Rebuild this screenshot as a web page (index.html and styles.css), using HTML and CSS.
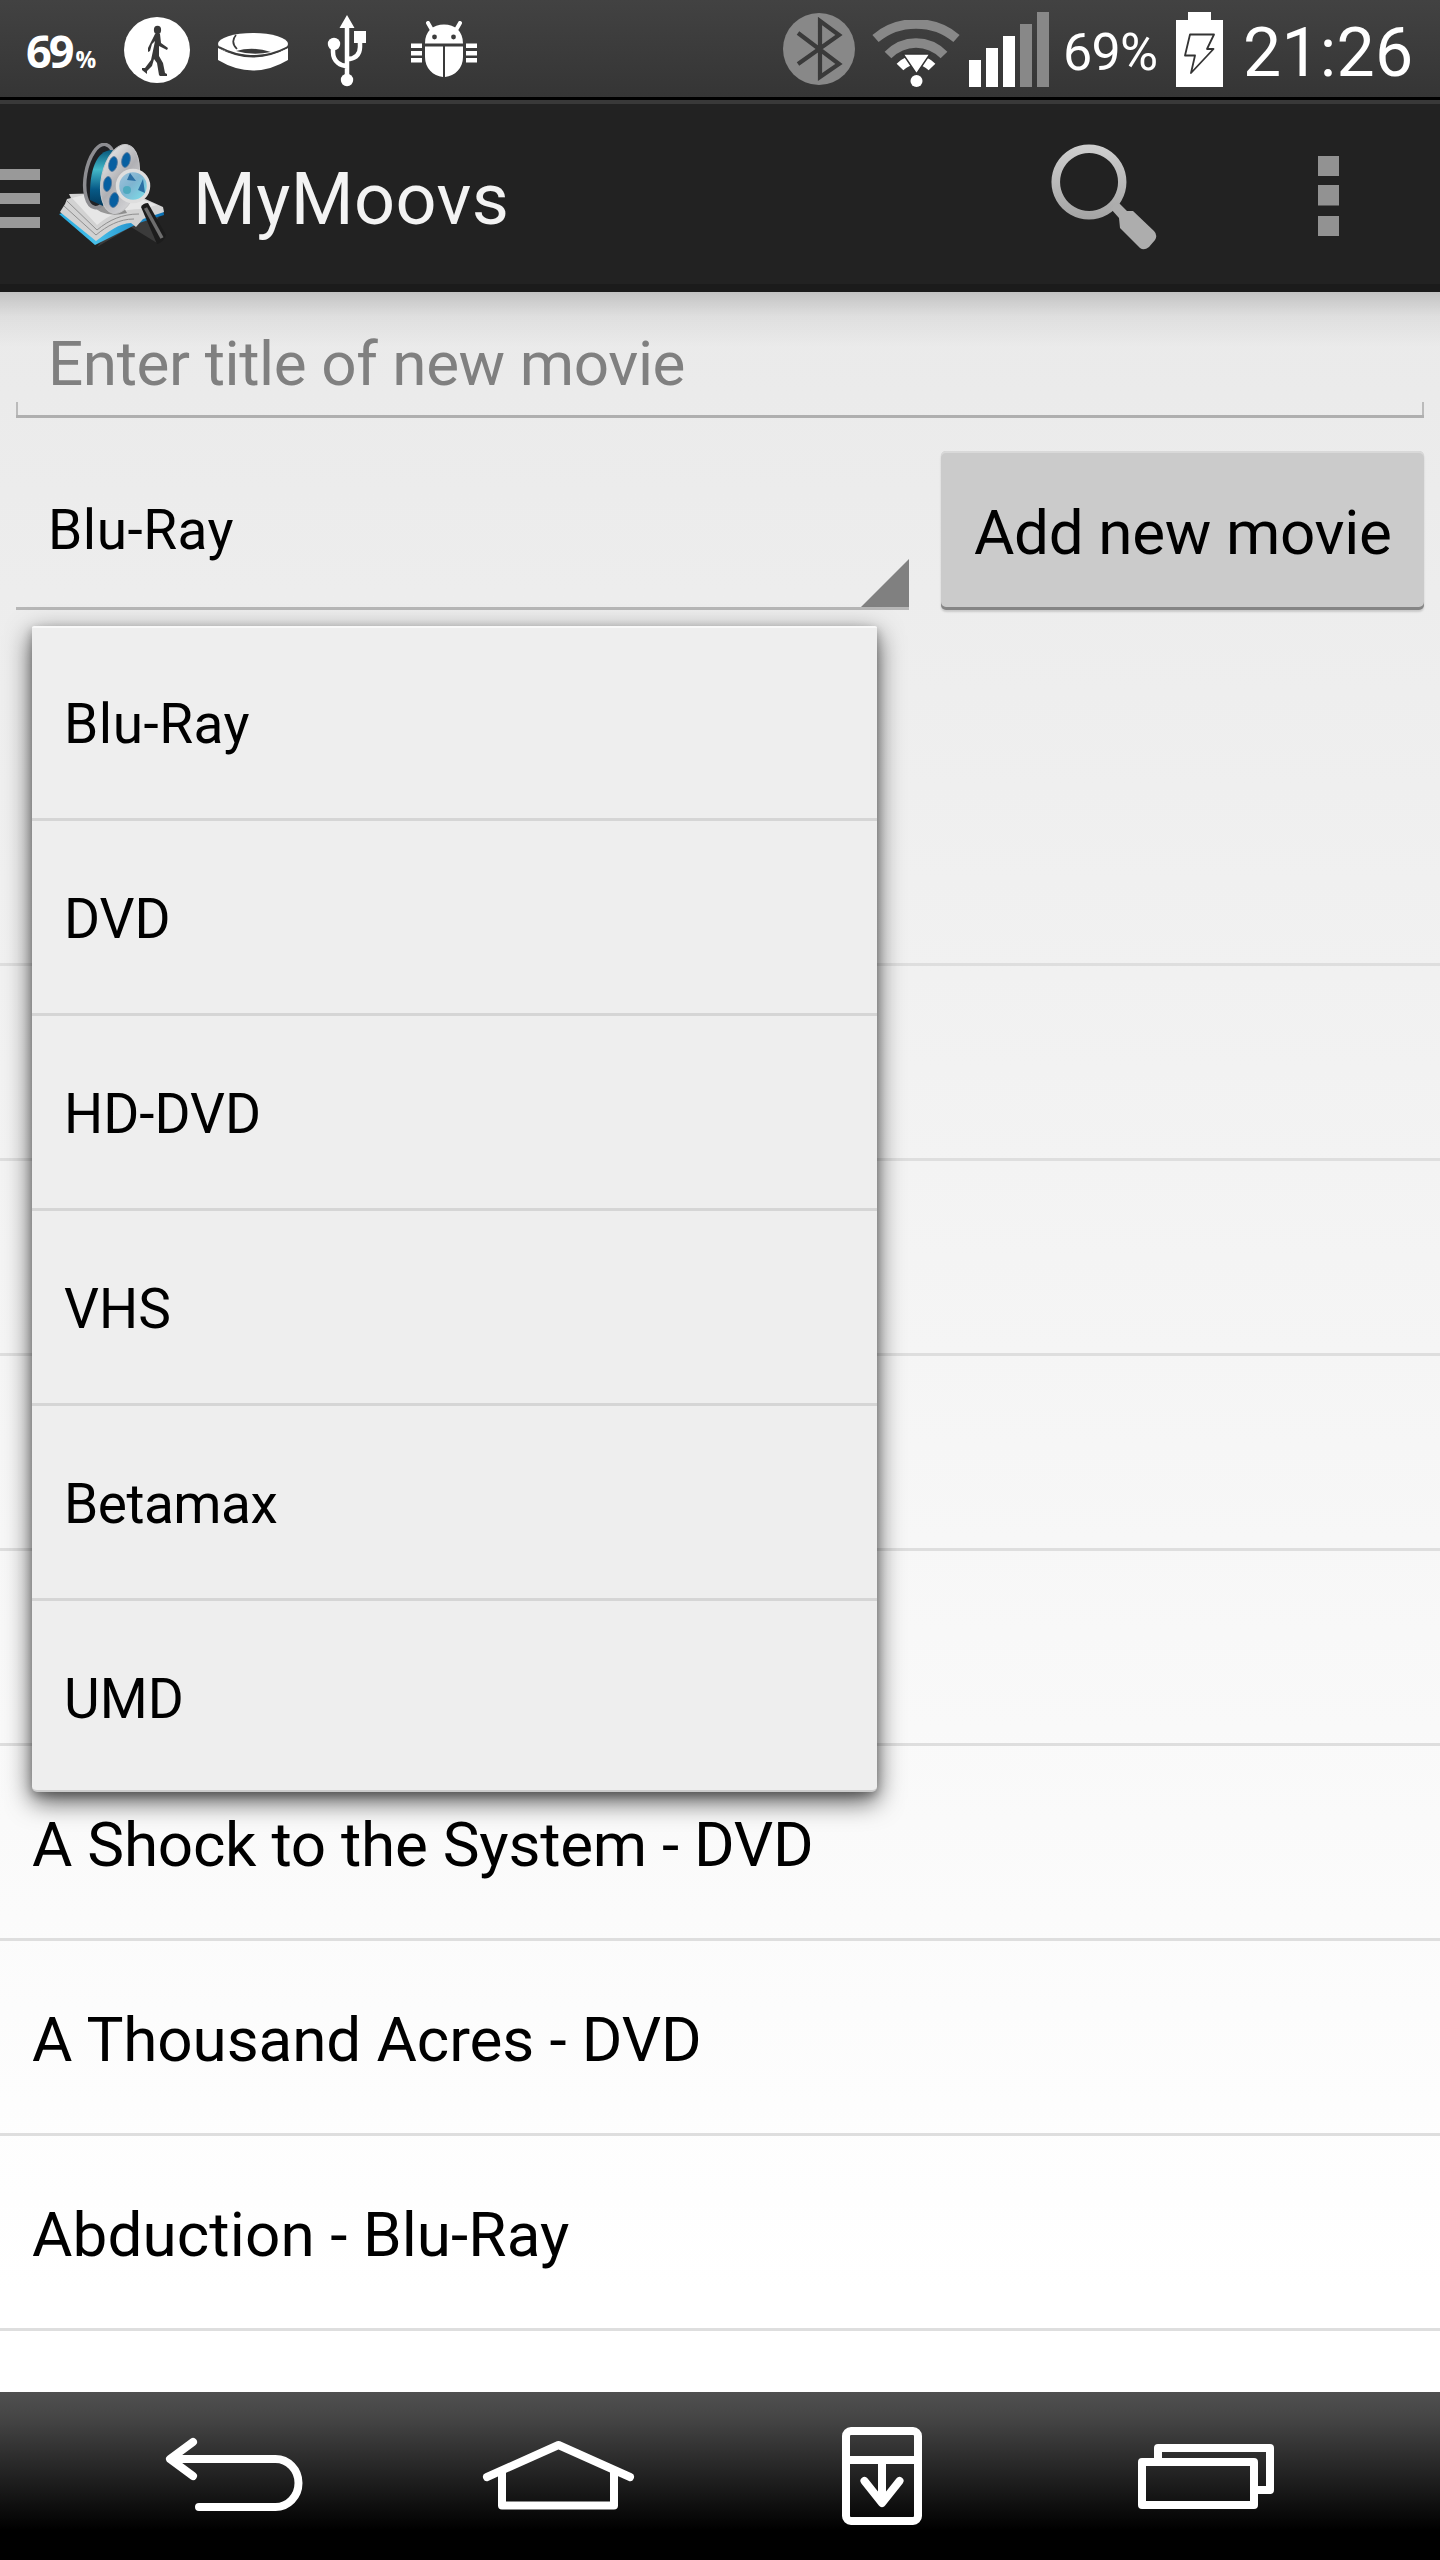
FILE: index.html
```html
<!DOCTYPE html>
<html lang="en">
<head>
<meta charset="utf-8">
<title>MyMoovs</title>
<link rel="stylesheet" href="styles.css">
</head>
<body>
<div class="screen">
  <header class="status">
    <div class="status-left">
      <span class="batt-note">69<small>%</small></span>
      <svg class="i-walk" width="66" height="66" viewBox="0 0 66 66"><circle cx="33" cy="33" r="33" fill="#fff"/><g fill="#383838"><ellipse cx="33.500" cy="13" rx="3.600" ry="4.200"/><path d="M31 17h5l1 9 7 5-1 2-8-4 0 10 4 7 2 10 2 1v2h-7l-1-1-2-12-3-4-2 7-5 5 0 3-5-4v-2l3 0 6-8 3-14 1-5-3 3-2 7-2 1 0-4 4-8z"/></g></svg>
      <svg class="i-ring" width="72" height="38" viewBox="0 0 72 38"><path d="M1 15Q36 34 71 15V27Q36 48 1 27Z" fill="#fff"/><ellipse cx="36" cy="11" rx="35" ry="11" fill="#fff"/><path d="M19 18Q36 13 54 19Q36 23 19 18Z" fill="#3b3b3b"/><path d="M2 14Q36 32 71 14M19 2Q13 9 20 16" fill="none" stroke="#3b3b3b" stroke-width="1.700"/></svg>
      <svg class="i-usb" width="40" height="72" viewBox="0 0 40 72"><path d="M20 10V62M6 30V37C6 47 14 51 20 51M33 20V32C33 41 27 44 20 44" fill="none" stroke="#fff" stroke-width="4.500"/><path d="M20 0 27.500 13H12.500ZM27 16H39V28H27Z" fill="#fff"/><circle cx="7" cy="29" r="6.200" fill="#fff"/><circle cx="20" cy="65" r="6.200" fill="#fff"/></svg>
      <svg class="i-bug" width="66" height="57" viewBox="0 0 66 57"><g fill="#fff"><path d="M14 22.500C14 10 22 3.500 33 3.500S52 10 52 22.500ZM14 25.500H32V56C22 55 14 47 14 36ZM34 25.500H52V36C52 47 44 55 34 56ZM0 22.500H11V27H0ZM0 30H11V34.500H0ZM0 37H11V41.500H0ZM55 22.500H66V27H55ZM55 30H66V34.500H55ZM55 37H66V41.500H55Z"/></g><path d="M17 2 21 9M49 2 45 9" stroke="#fff" stroke-width="4" stroke-linecap="round"/><circle cx="23.500" cy="16" r="2.400" fill="#3b3b3b"/><circle cx="42.500" cy="16" r="2.400" fill="#3b3b3b"/></svg>
    </div>
    <div class="status-right">
      <svg class="i-bt" width="72" height="72" viewBox="0 0 72 72"><circle cx="36" cy="36" r="36" fill="#888"/><path d="M15 20 56 51 37 64V8L56 22 15 51" fill="none" stroke="#3a3a3a" stroke-width="4.200"/></svg>
      <svg class="i-wifi" width="88" height="67" viewBox="0 0 88 67"><path d="M3.500 18.500C26-1 62-1 84.500 18.500M16 35C32 19 56 19 72 35" fill="none" stroke="#888" stroke-width="9.500"/><path d="M28 47C37 38 51 38 60 47" fill="none" stroke="#fff" stroke-width="9.500"/><path d="M31 34H58L44.500 54Z" fill="#fff" stroke="#333" stroke-width="1.500"/><circle cx="44.500" cy="61" r="6" fill="#fff"/></svg>
      <svg class="i-sig" width="80" height="75" viewBox="0 0 80 75"><path d="M0 48H12V75H0ZM17 36H29V75H17ZM34 24H46V75H34Z" fill="#fff"/><path d="M51 12H63V75H51ZM68 0H80V75H68Z" fill="#888"/></svg>
      <span class="pct">69%</span>
      <svg class="i-batt" width="47" height="75" viewBox="0 0 47 75"><path d="M12 0H35V8H47V75H0V8H12Z" fill="#fff"/><path d="M14 22.500H38L31 37H37.500L15 61 19 43.500H9Z" fill="#fff" stroke="#333" stroke-width="1.800" stroke-linejoin="round"/></svg>
      <span class="clock">21:26</span>
    </div>
  </header>

  <div class="actionbar">
    <svg class="i-drawer" width="40" height="59" viewBox="0 0 40 59"><path d="M0 0H40V11H0ZM0 24H40V35H0ZM0 48H40V59H0Z" fill="#999"/></svg>
    <svg class="logo" width="108" height="106" viewBox="0 0 108 106">
      <defs>
        <linearGradient id="metal" x1="0" y1="0" x2="1" y2="1"><stop offset="0" stop-color="#efefef"/><stop offset=".5" stop-color="#b0b0b4"/><stop offset="1" stop-color="#dedee0"/></linearGradient>
        <linearGradient id="film" x1="0" y1="0" x2="0" y2="1"><stop offset="0" stop-color="#07587c"/><stop offset=".35" stop-color="#43b8c8"/><stop offset=".7" stop-color="#075a87"/><stop offset="1" stop-color="#033a5c"/></linearGradient>
        <linearGradient id="glass" x1="0" y1="0" x2="1" y2="1"><stop offset="0" stop-color="#a5c6de"/><stop offset=".45" stop-color="#7fb4d0"/><stop offset="1" stop-color="#7ce6ee"/></linearGradient>
        <linearGradient id="cover" x1="0" y1="0" x2="1" y2="0"><stop offset="0" stop-color="#22a9e0"/><stop offset=".35" stop-color="#47c0ea"/><stop offset="1" stop-color="#086fb4"/></linearGradient>
      </defs>
      <path d="M38 104 72 84 98 100 92 84 100 74 60 76Z" fill="#3b3b3b"/>
      <path d="M0 71 36 102 74 83 80 80 105 72 104 66 40 60Z" fill="url(#cover)"/>
      <path d="M1 69 6 61 8 56 12 55 10 51 50 50 82 54 104 64 105 69 84 76 77 84 72 80C60 80 48 90 37 98Z" fill="#d2d2d2"/>
      <path d="M5 63 37 92C48 83 60 76 75 76M8 58 38 87C50 77 63 71 80 71" fill="none" stroke="#8f8f8f" stroke-width="1"/>
      <path d="M13 55 38 82C50 72 62 66 84 66L98 62 72 52 40 48Z" fill="#e6e6e6"/>
      <path d="M30 60Q44 76 68 70L60 56Z" fill="#555" opacity=".55"/>
      <ellipse cx="41" cy="33" rx="14.500" ry="32" transform="rotate(10 41 33)" fill="#202124" stroke="#8d8d91" stroke-width="3.500"/>
      <path d="M52 7C38 8 30 26 31 57L44 63 60 9Z" fill="url(#film)"/>
      <ellipse cx="61" cy="36" rx="18.500" ry="35" transform="rotate(12 61 36)" fill="url(#metal)" stroke="#c8c8ca" stroke-width="1"/>
      <g fill="#075fa1" stroke="#56779a" stroke-width=".8"><ellipse cx="54" cy="21" rx="4.200" ry="7.500" transform="rotate(12 54 21)"/><ellipse cx="67" cy="17" rx="4.200" ry="7.500" transform="rotate(12 67 17)"/><ellipse cx="48.500" cy="41" rx="4" ry="7.500" transform="rotate(8 48.500 41)"/><ellipse cx="55" cy="57" rx="4.500" ry="7.500" transform="rotate(12 55 57)"/></g>
      <path d="M82 64Q84 60 89 60L107 92Q105 99 98 101Z" fill="#1c1c1c"/>
      <path d="M86.500 65 103 95" stroke="#6e6e6e" stroke-width="3.500"/>
      <circle cx="74" cy="43" r="15.500" fill="url(#glass)" stroke="#dedede" stroke-width="3.500"/>
      <path d="M71 30 68 37 77 38ZM84 36 79 47 86 50Z" fill="#2b6fa3"/><circle cx="68" cy="47" r="4" fill="#4faabf"/>
    </svg>
    <h1 class="title">MyMoovs</h1>
    <svg class="i-search" width="106" height="106" viewBox="0 0 106 106"><defs><linearGradient id="grey" x1="0" y1="0" x2="0" y2="1"><stop offset="0" stop-color="#cfcfcf"/><stop offset="1" stop-color="#a4a4a4"/></linearGradient></defs><path fill="url(#grey)" fill-rule="evenodd" d="M38 0.500A37.500 37.500 0 1 1 37.900 0.500ZM38 9A29 29 0 1 0 38.100 9Z"/><path d="M60 65 67 58 76 67 82 67 103 87Q107 91 104 96L98 103Q93 107 89 104L69 84 68 74Z" fill="#adadad"/></svg>
    <svg class="i-more" width="21" height="80" viewBox="0 0 21 80"><path d="M0 0H21V20H0ZM0 29H21V49.500H0ZM0 60H21V80H0Z" fill="#929292"/></svg>
  </div>

  <main class="content">
    <div class="field"><span>Enter title of new movie</span></div>
    <div class="form-row">
      <div class="spinner"><span class="wide">Blu-Ray</span>
        <ul class="popup">
          <li class="wide">Blu-Ray</li><li>DVD</li><li>HD-DVD</li><li>VHS</li><li class="tight">Betamax</li><li>UMD</li>
        </ul>
      </div>
      <button class="add"><span>Add new movie</span></button>
    </div>
    <ul class="movies">
      <li></li><li></li><li></li><li></li><li></li>
      <li><span class="m1">A Shock to the System - DVD</span></li>
      <li><span class="m2">A Thousand Acres - DVD</span></li>
      <li><span class="m3">Abduction - Blu-Ray</span></li>
    </ul>
  </main>

  <nav class="navbar">
    <svg class="n-back" width="138" height="78" viewBox="0 0 138 78"><path d="M28 5 5 22 28 39M8 22H110.500A23 24 0 0 1 110.500 70H34" fill="none" stroke="#fff" stroke-width="8" stroke-linecap="round" stroke-linejoin="round"/></svg>
    <svg class="n-home" width="154" height="72" viewBox="0 0 154 72"><path d="M5 37 76.500 5 148 37" fill="none" stroke="#fff" stroke-width="8" stroke-linecap="round" stroke-linejoin="round"/><path d="M20 32V65.500H132V32" fill="none" stroke="#fff" stroke-width="8" stroke-linejoin="round"/></svg>
    <svg class="n-down" width="80" height="98" viewBox="0 0 80 98"><rect x="4" y="4" width="72" height="90" rx="5" fill="none" stroke="#fff" stroke-width="8"/><path d="M4 33H76M40 33V74" stroke="#fff" stroke-width="8"/><path d="M22.500 54 40 76 57.500 54" fill="none" stroke="#fff" stroke-width="8" stroke-linecap="round" stroke-linejoin="round"/></svg>
    <svg class="n-recent" width="136" height="66" viewBox="0 0 136 66"><path d="M20 18V4H132V46H118" fill="none" stroke="#fff" stroke-width="8" stroke-linejoin="round"/><rect x="4" y="18" width="112" height="43" fill="none" stroke="#fff" stroke-width="8" stroke-linejoin="round"/></svg>
  </nav>
</div>
</body>
</html>
```
FILE: styles.css
```css
* { box-sizing: border-box; }
body { margin: 0; font-family: Roboto, "Liberation Sans", sans-serif; color: #000; }
ul { list-style: none; margin: 0; padding: 0; }
svg { display: block; flex: none; }
span, h1, li { white-space: nowrap; }
.screen { width: 1440px; height: 2560px; display: flex; flex-direction: column; overflow: hidden; }

.status { flex: none; height: 100px; display: flex; justify-content: space-between; border-bottom: 3px solid #000; background: linear-gradient(#424242, #353535); color: #fff; }
.status-left, .status-right { display: flex; align-items: flex-start; }
.status-left { padding-left: 26px; }
.batt-note { width: 98px; font-family: "Open Sans", "Noto Sans", sans-serif; font-size: 45px; font-weight: 700; line-height: 52px; letter-spacing: -3px; padding-top: 25px; }
.batt-note small { font-size: 23px; margin-left: 4px; }
.i-walk { margin-top: 17px; }
.i-ring { margin: 33px 0 0 27px; }
.i-usb { margin: 15px 0 0 38px; }
.i-bug { margin: 21px 0 0 44px; }
.status-right { width: 657px; }
.i-bt { margin-top: 13px; }
.i-wifi { margin: 20px 0 0 17px; }
.i-sig { margin: 12px 0 0 9px; }
.pct { width: 113px; margin-left: 14px; font-size: 52px; line-height: 60px; padding-top: 23px; letter-spacing: -.7px; }
.i-batt { margin-top: 12px; }
.clock { margin-left: 20px; font-size: 68px; line-height: 80px; padding-top: 13px; letter-spacing: .2px; }

.actionbar { flex: none; height: 192px; display: flex; align-items: flex-start; border-top: 4px solid #393939; border-bottom: 8px solid #1b1b1b; background: #222; }
.i-drawer { margin-top: 65px; }
.logo { margin: 39px 0 0 19px; }
.title { width: 853px; margin: 54px 0 0 26px; font-size: 72px; font-weight: 400; line-height: 84px; letter-spacing: .4px; color: #f3f3f3; }
.i-search { margin-top: 40px; margin-left: 5px; }
.i-more { margin: 52px 0 0 161px; }

.content { flex: 1; min-height: 0; overflow: hidden; padding: 0 16px; background: linear-gradient(rgba(0,0,0,.17), rgba(0,0,0,.05) 24px, rgba(0,0,0,0) 55px), linear-gradient(#eaeaea, #eee 400px, #fff 2000px); }
.field { height: 126px; padding: 36px 0 0 32px; color: #808080; font-size: 62px; line-height: 72px; letter-spacing: -.4px; border-bottom: 3px solid #afafaf; position: relative; }
.field::before, .field::after { content: ""; position: absolute; bottom: 0; width: 2px; height: 13px; background: #bbb; }
.field::before { left: 0; }
.field::after { right: 0; }
.form-row { display: flex; margin-top: 33px; gap: 32px; height: 159px; }
.spinner { position: relative; width: 893px; border-bottom: 3px solid #b7b7b7; padding: 47px 0 0 32px; font-size: 55px; line-height: 64px; }
.spinner::after { content: ""; position: absolute; right: 0; bottom: 0; width: 48px; height: 48px; background: #808080; clip-path: polygon(100% 0, 100% 100%, 0 100%); }
.wide { letter-spacing: .5px; }
.tight { letter-spacing: -.5px; }
.popup { position: absolute; z-index: 2; left: 16px; top: 175px; width: 845px; height: 1166px; background: #eee; border-radius: 2px 2px 5px 5px; border-top: 2px solid #f8f8f8; border-bottom: 2px solid #ccc; box-shadow: 0 9px 26px rgba(0,0,0,.68), 0 4px 10px rgba(0,0,0,.25); }
.popup li { height: 195px; padding: 66px 0 0 32px; border-bottom: 3px solid #d5d5d5; }
.popup li:first-child { height: 193px; padding-top: 64px; }
.popup li:last-child { border: 0; height: 187px; }
.add { width: 483px; height: 159px; padding: 46px 0 0 33px; border: 0; border-radius: 5px; background: #cbcbcb; box-shadow: inset 0 -3px #858585, inset 0 2px #d9d9d9, 0 2px 2px rgba(0,0,0,.15); font: 62px/72px Roboto, sans-serif; letter-spacing: -.35px; text-align: left; display: flex; align-items: flex-start; color: #000; }
.movies { margin: 161px -16px 0; }
.movies li { height: 195px; padding: 63px 0 0 32px; border-bottom: 3px solid #dedede; font-size: 62px; line-height: 72px; }
.m1 { letter-spacing: -.25px; }
.m2 { letter-spacing: -.1px; }
.m3 { letter-spacing: .1px; }

.navbar { flex: none; height: 168px; display: flex; align-items: flex-start; background: linear-gradient(#505050, #444 28px, #000 138px); }
.n-back { margin: 45px 0 0 165px; }
.n-home { margin: 48px 0 0 179px; }
.n-down { margin: 35px 0 0 206px; }
.n-recent { margin: 52px 0 0 216px; }
```
